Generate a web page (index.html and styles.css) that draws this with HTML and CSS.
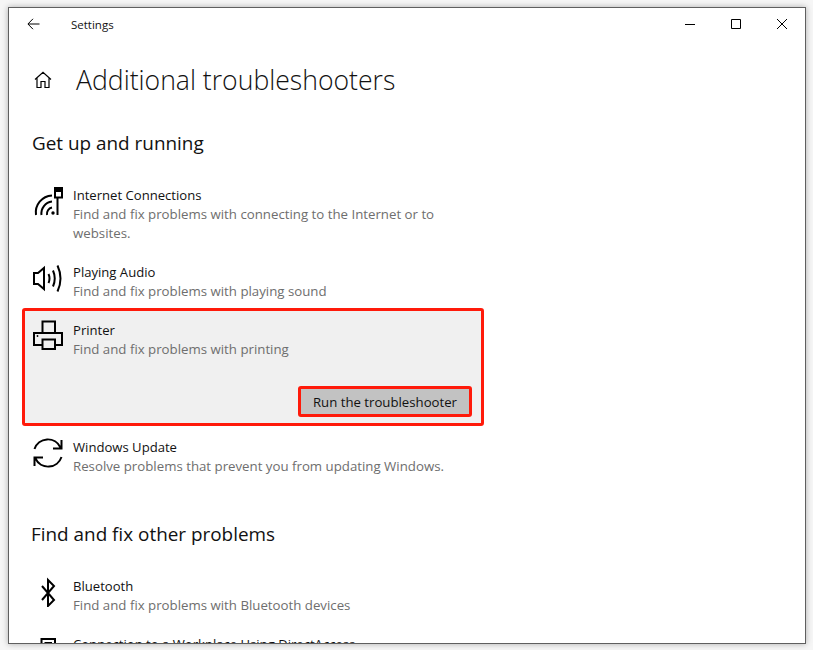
FILE: index.html
```html
<!DOCTYPE html>
<html lang="en">
<head>
<meta charset="utf-8">
<title>Settings</title>
<link rel="stylesheet" href="styles.css">
</head>
<body>
<main class="window">
  <header class="titlebar">
    <svg class="back" width="14" height="12" viewBox="0 0 14 12"><path d="M12.5 6H1M6 .8.9 6 6 11.2"/></svg>
    <span class="app-name">Settings</span>
    <div class="controls">
      <svg width="12" height="12" viewBox="0 0 12 12"><path d="M1 6.5H11"/></svg>
      <svg width="12" height="12" viewBox="0 0 12 12"><path d="M1.5 1.5H10.5V10.5H1.5Z"/></svg>
      <svg width="12" height="12" viewBox="0 0 12 12"><path d="M1 1 11 11M11 1 1 11"/></svg>
    </div>
  </header>

  <div class="page-head">
    <svg class="home" width="18" height="18" viewBox="0 0 18 18"><path d="M1 8.5 9 1.2l8 7.3M3 7v9.5h4V10.5h4v6h4V7"/></svg>
    <h1>Additional troubleshooters</h1>
  </div>

  <h2 class="first">Get up and running</h2>

  <section class="list">
    <article class="row">
      <svg class="icon" width="30" height="30" viewBox="0 0 30 30"><path d="M3 29A17 17 0 0 1 19 9.5M8.5 29A12 12 0 0 1 19 15.5M14 29A6.5 6.5 0 0 1 19 21.5M24.5 12V29M22 2H29V11.5H22Z"/><path class="solid" d="M22 2H29V6H22Z"/><circle class="solid" cx="20" cy="27" r="1.7"/></svg>
      <div class="copy">
        <div class="name">Internet Connections</div>
        <div class="desc">Find and fix problems with connecting to the Internet or to websites.</div>
      </div>
    </article>

    <article class="row">
      <svg class="icon" width="30" height="30" viewBox="0 0 30 30"><path d="M1 10H5L11 5V26L5 21H1ZM15.5 11Q17.5 15.5 15.5 20M20 7.5Q23.5 15.5 20 23.5M24.5 2.5Q30.5 15.5 24.5 28.5"/></svg>
      <div class="copy">
        <div class="name">Playing Audio</div>
        <div class="desc">Find and fix problems with playing sound</div>
      </div>
    </article>

    <article class="row selected">
      <div class="row-main">
        <svg class="icon" width="30" height="30" viewBox="0 0 30 30"><path d="M9.5 13V1.5H22V13M9.5 25H1V13H29V25H22"/><path d="M9.5 19.5H22V29H9.5Z"/><circle class="solid" cx="4.5" cy="16" r=".9"/></svg>
        <div class="copy">
          <div class="name">Printer</div>
          <div class="desc">Find and fix problems with printing</div>
        </div>
      </div>
      <div class="actions"><button class="run" type="button">Run the troubleshooter</button></div>
    </article>

    <article class="row">
      <svg class="icon" width="30" height="30" viewBox="0 0 30 30"><path d="M1.5 11A14 14 0 0 1 27.5 9.5M28.5 2V10.5H20M28.5 19A14 14 0 0 1 2.5 20.5M1.5 28V19.5H10"/></svg>
      <div class="copy">
        <div class="name">Windows Update</div>
        <div class="desc">Resolve problems that prevent you from updating Windows.</div>
      </div>
    </article>
  </section>

  <h2 class="second">Find and fix other problems</h2>

  <section class="list">
    <article class="row">
      <svg class="icon" width="30" height="30" viewBox="0 0 30 30"><path d="M9 9 21 23 15 29V3L21 9 9 23"/></svg>
      <div class="copy">
        <div class="name">Bluetooth</div>
        <div class="desc">Find and fix problems with Bluetooth devices</div>
      </div>
    </article>
    <article class="row">
      <svg class="icon" width="30" height="30" viewBox="0 0 30 30"><path d="M8.5 4H22V26H8.5ZM11.5 8H19"/></svg>
      <div class="copy">
        <div class="name">Connection to a Workplace Using DirectAccess</div>
      </div>
    </article>
  </section>
</main>
</body>
</html>
```

FILE: styles.css
```css
* { box-sizing: border-box; }

html, body {
  margin: 0;
  height: 650px;
  overflow: hidden;
  background: #f6f6f6;
}

body {
  padding: 7px 8px 0;
  font-family: "Open Sans", "Noto Sans", sans-serif;
  color: #000;
}

.window {
  width: 798px;
  height: 637px;
  background: #fff;
  border: 1px solid #5f5f5f;
  overflow: hidden;
  box-shadow: 0 0 6px rgba(0, 0, 0, .3);
}

svg path, svg circle {
  fill: none;
  stroke: #000;
  stroke-width: 2;
}

svg .solid { fill: #000; stroke: none; }

.titlebar {
  height: 32px;
  display: flex;
  align-items: center;
  padding-left: 18px;
}

.titlebar svg path { stroke-width: 1; }

.back { margin-right: 30px; }

.app-name { font-size: 11.5px; color: #111; }

.controls {
  margin-left: auto;
  display: flex;
  gap: 34px;
  padding-right: 17px;
}

.page-head {
  margin-top: 20px;
  height: 40px;
  display: flex;
  align-items: center;
  padding-left: 25px;
}

.home { margin-right: 24px; }
.home path { stroke-width: 1.2; }

h1 {
  margin: 0;
  font-size: 26.6px;
  font-weight: 300;
  line-height: 40px;
  color: #111;
}

h2 {
  margin: 0 0 0 23px;
  font-size: 18.9px;
  font-weight: 400;
  line-height: 28px;
  color: #111;
}

h2.first { margin-top: 29px; margin-bottom: 16px; }
h2.second { margin-top: 37px; margin-bottom: 16px; margin-left: 22px; }

.list {
  margin-left: 13px;
  width: 462px;
  display: flex;
  flex-direction: column;
}

.row {
  display: flex;
  gap: 10px;
  padding: 12px 20px 7px 11px;
}

.icon { flex: none; margin-top: 1px; }

.copy { flex: 1; min-width: 0; }

.name {
  font-size: 13.1px;
  line-height: 20px;
  color: #111;
}

.desc {
  font-size: 13.25px;
  line-height: 19px;
  color: #6e6e6e;
}

.selected {
  display: block;
  padding: 9px 9px 6px 8px;
  margin-bottom: -1px;
  background: #f0f0f0;
  border: 3px solid #ff1a0a;
  border-radius: 3px;
}

.row-main { display: flex; gap: 10px; }
.selected .icon { margin-top: 0; }

.actions {
  display: flex;
  justify-content: flex-end;
  margin-top: 27px;
}

.run {
  width: 174px;
  height: 31px;
  padding: 0;
  background: #c2c2c2;
  border: 3px solid #ff1a0a;
  border-radius: 3px;
  font: 13.2px "Open Sans", "Noto Sans", sans-serif;
  color: #111;
}
```
